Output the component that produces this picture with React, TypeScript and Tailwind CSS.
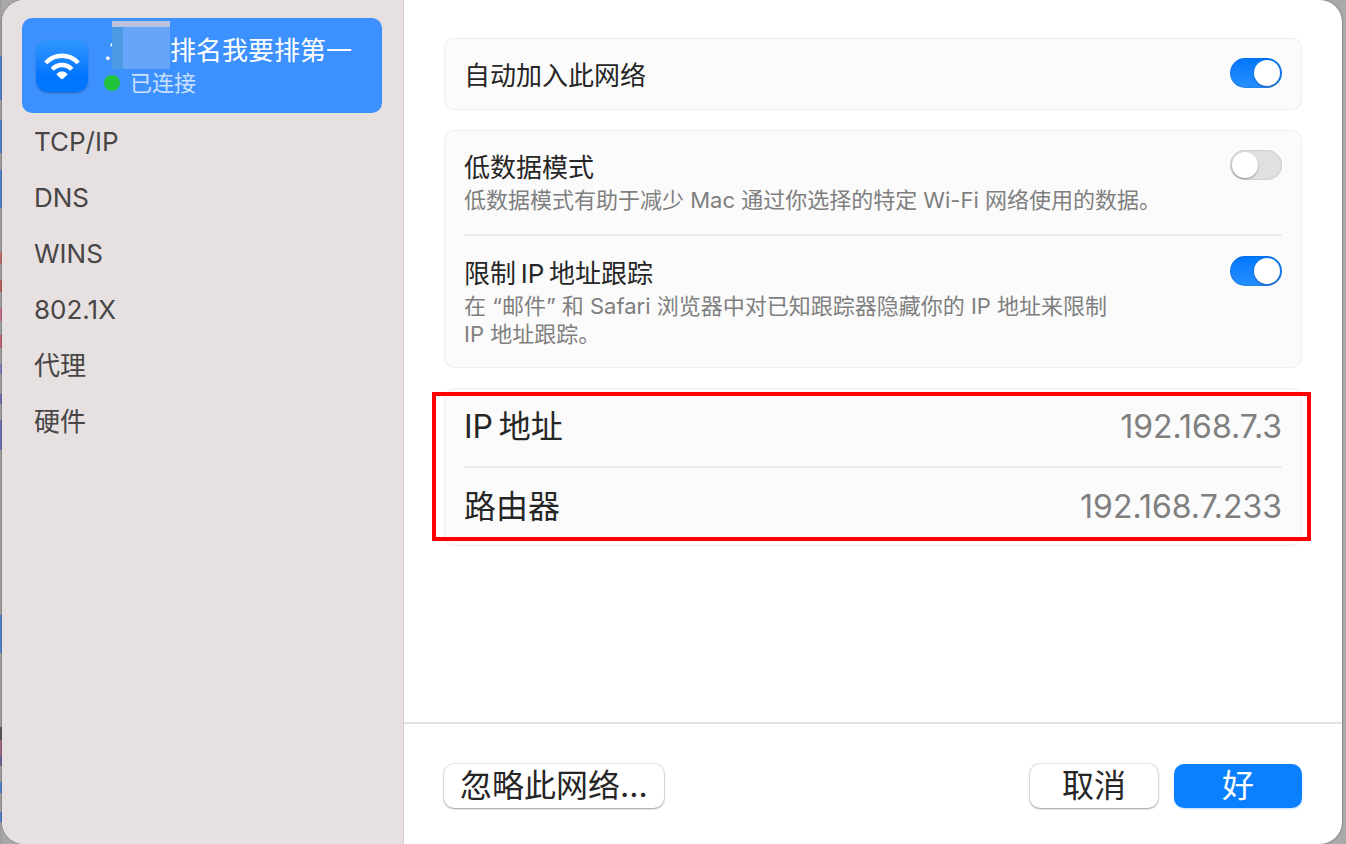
import { useState, type ReactNode } from "react";

const SECTIONS = ["TCP/IP", "DNS", "WINS", "802.1X", "代理", "硬件"];

const ADDRESSES = [
  { label: "IP\u2009地址", value: "192.168.7.3" },
  { label: "路由器", value: "192.168.7.233" },
];

function WifiGlyph() {
  return (
    <svg viewBox="0 0 52 52" className="h-full w-full" fill="none" aria-hidden="true">
      <g stroke="#fff" strokeWidth="4.4">
        <path d="M9.8 22.9A21.8 21.8 0 0 1 42.2 22.9" />
        <path d="M16.2 29.3A13.4 13.4 0 0 1 35.8 29.3" />
      </g>
      <path
        d="M21.2 33.4C23.8 30.9 28.2 30.9 30.8 33.4C31.6 34.2 31.5 34.7 30.9 35.3L27 38.7C26.3 39.3 25.7 39.3 25 38.7L21.1 35.3C20.5 34.7 20.4 34.2 21.2 33.4Z"
        fill="#fff"
      />
    </svg>
  );
}

function Card({ children }: { children: ReactNode }) {
  return (
    <div className="relative rounded-[10px] bg-[#fbfbfb] px-5 shadow-[inset_0_0_0_1px_#eeeeee]">
      {children}
    </div>
  );
}

function ToggleRow({
  id,
  title,
  children,
  defaultOn = false,
}: {
  id: string;
  title: string;
  children?: ReactNode;
  defaultOn?: boolean;
}) {
  const [on, setOn] = useState(defaultOn);

  return (
    <div className={`flex items-start justify-between gap-4 pt-5 ${children ? "pb-5" : "pb-4"}`}>
      <div>
        <label htmlFor={id} className="block text-[26px] leading-9 text-[#262626]">
          {title}
        </label>
        {children && <p className="text-[22px] leading-7 text-[#7f7f7f]">{children}</p>}
      </div>
      <input
        id={id}
        type="checkbox"
        role="switch"
        checked={on}
        onChange={(e) => setOn(e.target.checked)}
        className="flex h-[30px] w-[52px] shrink-0 appearance-none rounded-full bg-[#e0e0e0] p-0.5 shadow-[inset_0_0_2px_#00000040] before:size-[26px] before:rounded-full before:bg-white before:shadow-[0_1px_2px_#00000055] checked:justify-end checked:bg-linear-to-b checked:from-[#0076fb] checked:to-[#2690ff]"
      />
    </div>
  );
}

export default function App() {
  return (
    <div className="flex min-h-screen bg-[#a9a9a9] bg-[linear-gradient(#a0a0a0_56px,#5484c4_56px_100px,#a0a0a0_100px_120px,#5484c4_120px_153px,#a0a0a0_153px_170px,#5484c4_170px_208px,#a0a0a0_208px_252px,#c07070_252px_264px,#a0a0a0_264px_280px,#b86464_280px_292px,#a0a0a0_292px_308px,#c0708a_308px_321px,#a0a0a0_321px_335px,#c06478_335px_348px,#a0a0a0_348px_364px,#8080b8_364px_374px,#a0a0a0_374px_394px,#7070b0_394px_404px,#a0a0a0_404px_420px,#7070b0_420px_450px,#a0a0a0_450px_615px,#5484c4_615px_653px,#a0a0a0_653px_727px,#605858_727px_740px,#a06888_740px_755px,#706898_755px_766px,#a0a0a0_766px_782px,#5484c4_782px_793px,#a0a0a0_793px_812px,#5484c4_812px_822px,#a0a0a0_822px)] bg-[length:2px_100%] bg-no-repeat pr-1 pl-0.5 font-[Inter,'Noto_Sans_CJK_SC',sans-serif]">
      <div className="flex flex-1 overflow-hidden rounded-[22px] bg-white shadow-[0_0_2px_#00000080]">
        <aside className="w-[402px] shrink-0 border-r border-[#d2cccc] bg-[#e6e0e0] py-[18px] pr-[21px] pl-5">
          <button
            type="button"
            className="flex h-[95px] w-full items-center gap-4 rounded-[10px] bg-[#3d91ff] px-3.5 text-left"
          >
            <span className="size-[52px] shrink-0 rounded-xl bg-linear-to-b from-[#2f96ff] to-[#0075ff] to-70% shadow-[0_1px_2px_#00000050]">
              <WifiGlyph />
            </span>
            <span className="flex flex-col pb-0.5">
              <span className="flex text-[26px] leading-9 text-white">
                <span className="relative w-[66px]">
                  .1
                  <span className="absolute -top-3 right-0 flex h-12 w-[58px] border-t-6 border-[#bac2de] bg-[#67a5fb]">
                    <span className="w-[11px] bg-[#4b9be2]" />
                  </span>
                </span>
                排名我要排第一
              </span>
              <span className="flex items-center gap-2.5 text-[22px] leading-7 text-[#cce1ff]">
                <span className="size-4 rounded-full bg-[#20c43a]" />
                已连接
              </span>
            </span>
          </button>
          <nav className="pt-px">
            {SECTIONS.map((s) => (
              <a
                key={s}
                href="#"
                className="flex h-14 items-center px-3 text-[26px] leading-8 text-[#474545]"
              >
                {s}
              </a>
            ))}
          </nav>
        </aside>

        <main className="flex flex-1 flex-col">
          <div className="flex flex-1 flex-col gap-5 px-10 pt-[38px]">
            <Card>
              <ToggleRow id="auto-join" title="自动加入此网络" defaultOn />
            </Card>

            <Card>
              <ToggleRow id="low-data" title="低数据模式">
                低数据模式有助于减少 Mac 通过你选择的特定 Wi-Fi 网络使用的数据。
              </ToggleRow>
              <div className="h-0.5 bg-[#ededed]" />
              <ToggleRow id="limit-tracking" title={"限制\u2009IP\u2009地址跟踪"} defaultOn>
                在 “邮件” 和 Safari 浏览器中对已知跟踪器隐藏你的 IP 地址来限制
                <br />
                IP 地址跟踪。
              </ToggleRow>
            </Card>

            <Card>
              <dl className="divide-y-2 divide-[#ededed]">
                {ADDRESSES.map((a) => (
                  <div key={a.label} className="flex items-center justify-between py-[19px] text-[32px] leading-10">
                    <dt className="text-[#262626]">{a.label}</dt>
                    <dd className="text-[#7f7f7f]">{a.value}</dd>
                  </div>
                ))}
              </dl>
              <div className="pointer-events-none absolute -left-3 -right-[9px] top-1 bottom-[5px] border-4 border-[#ff0000]" />
            </Card>
          </div>

          <footer className="flex items-center gap-4 border-t-2 border-[#e3e3e3] px-10 pt-10 pb-9 text-[32px] leading-[44px] text-[#262626]">
            <button
              type="button"
              className="mr-auto rounded-[10px] bg-white px-4 shadow-[0_0_1px_1px_#00000018,0_1px_2px_#00000050]"
            >
              忽略此网络...
            </button>
            <button
              type="button"
              className="w-32 rounded-[10px] bg-white shadow-[0_0_1px_1px_#00000018,0_1px_2px_#00000050]"
            >
              取消
            </button>
            <button type="button" className="w-32 rounded-[10px] bg-[#0b80ff] text-white shadow-[0_1px_2px_#0b80ff40]">
              好
            </button>
          </footer>
        </main>
      </div>
    </div>
  );
}
